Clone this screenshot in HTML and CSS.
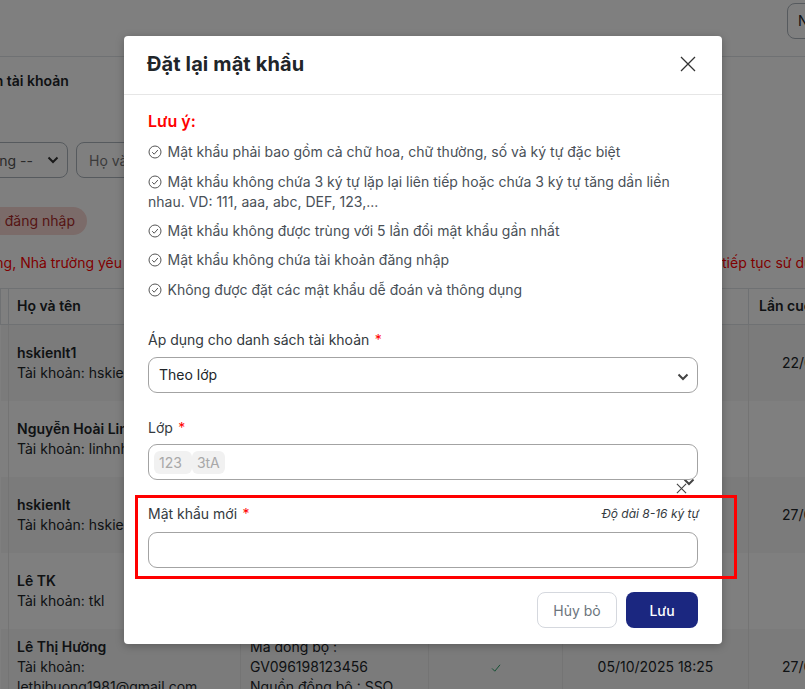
FILE: index.html
```html
<!DOCTYPE html>
<html lang="vi">
<head>
<meta charset="utf-8">
<title>Đặt lại mật khẩu</title>
<link rel="stylesheet" href="styles.css">
</head>
<body>
<div class="page">
  <header class="topbar"><div class="top-btn">N</div></header>
  <section class="bg-content">
    <div class="bg-title">Danh sách tài khoản</div>
    <div class="filters">
      <div class="bg-select"><span>Trạng thái hoạt động --</span><svg class="chev" viewBox="0 0 12 8"><path d="M1.500 1.500 6 6l4.500-4.500"/></svg></div>
      <div class="bg-input">Họ và tên</div>
    </div>
    <div class="pill-row"><span class="pill"><span>Chưa đổi mật khẩu đăng nhập</span></span></div>
    <div class="warn">
      <div class="warn-left"><span>Để đảm bảo an toàn tài khoản đăng nhập hệ thống, Nhà trường yêu</span></div>
      <span class="warn-right">tiếp tục sử dụng</span>
    </div>
  </section>
  <table class="grid">
    <colgroup><col class="c0"><col class="c1"><col class="c2"><col class="c3"><col class="c4"><col class="c5"></colgroup>
    <thead><tr><th></th><th>Họ và tên</th><th></th><th></th><th></th><th class="th-last">Lần cuối</th></tr></thead>
    <tbody>
      <tr class="odd"><td></td><td><b>hskienlt1</b><br>Tài khoản: hskienlt1</td><td></td><td></td><td></td><td class="last">22/09/2025</td></tr>
      <tr><td></td><td><b>Nguyễn Hoài Linh</b><br>Tài khoản: linhnh</td><td></td><td></td><td></td><td class="last"></td></tr>
      <tr class="odd"><td></td><td><b>hskienlt</b><br>Tài khoản: hskienlt</td><td></td><td></td><td></td><td class="last">27/09/2025</td></tr>
      <tr><td></td><td><b>Lê TK</b><br>Tài khoản: tkl</td><td></td><td></td><td></td><td class="last"></td></tr>
      <tr class="odd top"><td></td><td><b>Lê Thị Hường</b><br>Tài khoản:<br>lethibuong1981@gmail.com</td><td class="sync">Mã đồng bộ :<br>GV096198123456<br>Nguồn đồng bộ : SSO</td><td class="mid"><svg class="tick" viewBox="0 0 12 10"><path d="M1 5.500 4.500 9 11 1"/></svg></td><td class="mid">05/10/2025 18:25</td><td class="last mid-last">27/09/2025</td></tr>
    </tbody>
  </table>

  <div class="overlay"></div>

  <div class="modal">
    <svg class="stray-chev" viewBox="0 0 12 8"><path d="M1.500 1.500 6 6l4.500-4.500"/></svg>
    <div class="modal-head">
      <h2>Đặt lại mật khẩu</h2>
      <svg class="close" viewBox="0 0 16 16"><path d="M1 1l14 14M15 1 1 15"/></svg>
    </div>
    <div class="modal-body">
      <h3>Lưu ý:</h3>
      <ul class="rules">
        <li><svg class="ok" viewBox="0 0 14 14"><circle cx="7" cy="7" r="6"/><path d="M4.200 7.200 6.200 9.200 9.900 5"/></svg>Mật khẩu phải bao gồm cả chữ hoa, chữ thường, số và ký tự đặc biệt</li>
        <li><svg class="ok" viewBox="0 0 14 14"><circle cx="7" cy="7" r="6"/><path d="M4.200 7.200 6.200 9.200 9.900 5"/></svg>Mật khẩu không chứa 3 ký tự lặp lại liên tiếp hoặc chứa 3 ký tự tăng dần liền nhau. VD: 111, aaa, abc, DEF, 123,...</li>
        <li><svg class="ok" viewBox="0 0 14 14"><circle cx="7" cy="7" r="6"/><path d="M4.200 7.200 6.200 9.200 9.900 5"/></svg>Mật khẩu không được trùng với 5 lần đổi mật khẩu gần nhất</li>
        <li><svg class="ok" viewBox="0 0 14 14"><circle cx="7" cy="7" r="6"/><path d="M4.200 7.200 6.200 9.200 9.900 5"/></svg>Mật khẩu không chứa tài khoản đăng nhập</li>
        <li><svg class="ok" viewBox="0 0 14 14"><circle cx="7" cy="7" r="6"/><path d="M4.200 7.200 6.200 9.200 9.900 5"/></svg>Không được đặt các mật khẩu dễ đoán và thông dụng</li>
      </ul>
      <div class="field first">
        <label>Áp dụng cho danh sách tài khoản <em>*</em></label>
        <div class="control select"><span>Theo lớp</span><svg class="chev dark" viewBox="0 0 12 8"><path d="M1.500 1.500 6 6l4.500-4.500"/></svg></div>
      </div>
      <div class="field second">
        <label>Lớp <em>*</em></label>
        <div class="control multi"><span class="tag">123</span><span class="tag">3tA</span></div>
      </div>
      <div class="field third">
        <div class="label-row"><label>Mật khẩu mới <em>*</em></label><i>Độ dài 8-16 ký tự</i></div>
        <div class="control"></div>
      </div>
      <div class="actions"><button class="btn ghost">Hủy bỏ</button><button class="btn primary">Lưu</button></div>
    </div>
    <svg class="stray-x" viewBox="0 0 12 12"><path d="M1 1l10 10M11 1 1 11"/></svg>
  </div>
  <div class="highlight"></div>
</div>
</body>
</html>
```

FILE: styles.css
```css
* { box-sizing: border-box; }
html, body { margin: 0; padding: 0; }
body { font-family: Inter, "Noto Sans", sans-serif; font-size: 14px; color: #212529; background: #fff; }
.page { position: relative; width: 805px; height: 689px; overflow: hidden; background: #fff; }

.topbar { height: 57px; border-bottom: 1px solid #dee2e6; display: flex; justify-content: flex-end; padding-top: 3px; }
.top-btn { width: 60px; height: 36px; margin-right: -42px; border: 1px solid #adb5bd; border-radius: 8px; padding: 8px 10px; line-height: 18px; }

.bg-content { margin-left: -62px; width: 1100px; }
.bg-title { font-weight: 600; margin: 15px 0 0 -6px; line-height: 18px; font-size: 14px; }
.filters { display: flex; gap: 8px; margin-top: 52px; }
.bg-select { width: 130px; height: 36px; border: 1px solid #adb5bd; border-radius: 8px; display: flex; align-items: center; justify-content: flex-end; gap: 14px; padding-right: 8px; white-space: nowrap; color: #555; overflow: hidden; flex: none; }
.bg-select span { flex: none; }
.bg-input { width: 180px; height: 36px; border: 1px solid #adb5bd; border-radius: 8px; padding: 8px 12px; color: #777; line-height: 20px; flex: none; }
.pill-row { margin-top: 29px; }
.pill { display: flex; justify-content: flex-end; height: 28px; line-height: 28px; padding-right: 12px; width: 149px; border-radius: 14px; background: #f7d6d2; color: #ab2b2b; white-space: nowrap; }
.pill span { flex: none; }
.warn { margin-top: 18px; line-height: 20px; color: #f00; white-space: nowrap; display: flex; }
.warn-left { width: 184px; display: flex; justify-content: flex-end; flex: none; }
.warn-left span { flex: none; }
.warn-right { margin-left: 600px; flex: none; }

.grid { position: absolute; left: 0; top: 288px; width: 1000px; table-layout: fixed; border-collapse: collapse; line-height: 20px; }
.c0 { width: 8px; } .c1 { width: 232px; } .c2 { width: 188px; } .c3 { width: 134px; } .c4 { width: 186px; } .c5 { width: 252px; }
.grid th { height: 36px; text-align: left; padding: 0 8px 2px; font-weight: 600; border: 1px solid #dee2e6; }
.grid th.th-last { padding-left: 10px; }
.grid td { height: 76px; padding: 7px 8px; border-right: 1px solid #e9e9e9; vertical-align: middle; }
.grid td b { font-weight: 600; }
.grid tr.odd td { background: #f7f7f7; }
.grid tr.top td { vertical-align: top; padding-top: 8px; }
.grid tr.top td.sync { padding-left: 9px; }
.grid tr.top td.mid { text-align: center; padding-top: 28px; }
.grid tr.top td.mid-last { padding-top: 28px; }
.grid td.last { padding-left: 33px; white-space: nowrap; }
.tick { width: 10px; height: 8px; fill: none; stroke: #1f9d62; stroke-width: 1.200; }

.overlay { position: absolute; inset: 0; background: rgba(0, 0, 0, .5); }

.modal { position: absolute; left: 124px; top: 36px; width: 598px; height: 608px; background: #fff; border-radius: 4px; box-shadow: 0 2px 8px rgba(0, 0, 0, .25); }
.modal-head { height: 59px; border-bottom: 1px solid #e6e6e6; display: flex; align-items: center; justify-content: space-between; padding: 0 26px 2px 23px; }
.modal-head h2 { margin: 0; font-size: 20px; font-weight: 700; letter-spacing: .12px; line-height: 24px; color: #212529; }
.close { width: 16px; height: 16px; fill: none; stroke: #333; stroke-width: 1.300; }
.modal-body { position: relative; padding: 16px 24px 0; }
.modal-body h3 { margin: 0; font-size: 16px; line-height: 20px; font-weight: 600; color: #f00; }
.rules { list-style: none; margin: 11.200px 0 0; padding: 0; color: #495057; line-height: 20px; }
.rules li { margin-bottom: 9.400px; }
.ok { width: 14px; height: 14px; margin-right: 5.500px; vertical-align: -2px; fill: none; stroke: #555; stroke-width: 1; }

.field label { color: #343a40; line-height: 20px; display: block; padding-top: 1px; }
.field em { color: #f00; font-style: normal; margin-left: 1.500px; }
.first { margin-top: 29.300px; }
.second { margin-top: 24px; }
.third { margin-top: 23px; }
.control { margin-top: 7px; height: 36px; border: 1px solid #a3a3a3; border-radius: 9px; background: #fff; }
.select { display: flex; align-items: center; justify-content: space-between; padding: 0 8px 0 10px; color: #212529; }
.select span { margin-bottom: 2px; }
.multi { display: flex; align-items: center; padding-left: 5px; margin-top: 6px; }
.tag { background: #f1f1f1; color: #a8a8a8; height: 23px; line-height: 23px; padding: 0 5px; border-radius: 6px; }
.tag:first-child { padding-right: 10px; }
.label-row { display: flex; justify-content: space-between; align-items: center; }
.label-row i { font-size: 12px; color: #343a40; margin-right: -1px; }
.third .control { margin-top: 8px; }
.actions { display: flex; justify-content: flex-end; gap: 9px; margin-top: 24px; }
.btn { height: 36px; border-radius: 8px; font: inherit; padding: 0; }
.ghost { width: 80px; border: 1px solid #d5d8de; background: #fff; color: #6c757d; }
.primary { width: 72px; border: 0; background: #1b2780; color: #fff; font-weight: 500; }

.chev { width: 12px; height: 8px; fill: none; stroke: #333; stroke-width: 2; flex: none; }
.chev.dark { stroke: #444; margin-top: 4px; }
.stray-chev { position: absolute; left: 559px; top: 442px; width: 12px; height: 8px; fill: none; stroke: #444; stroke-width: 2; }
.stray-x { position: absolute; left: 552px; top: 447px; width: 11px; height: 11px; fill: none; stroke: #444; stroke-width: 1.200; }
.highlight { position: absolute; left: 135px; top: 495px; width: 602px; height: 84px; border: 3px solid #f00; }
```
